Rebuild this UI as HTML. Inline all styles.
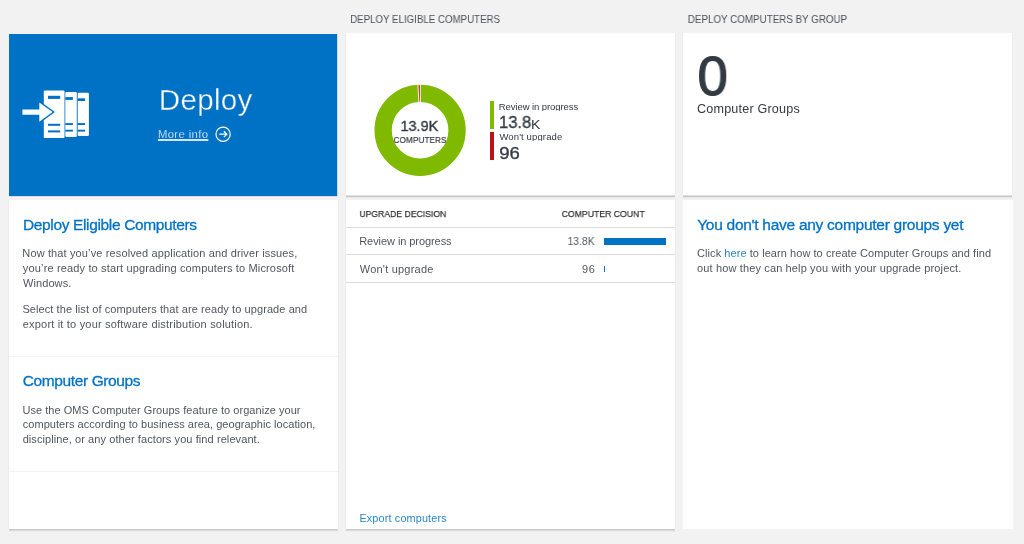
<!DOCTYPE html>
<html lang="en">
<head>
<meta charset="utf-8">
<title>Deploy</title>
<style>
html,body{margin:0;padding:0;}
body{width:1024px;height:544px;overflow:hidden;background:#f2f2f2;font-family:"Liberation Sans",Arial,sans-serif;}
#page{position:relative;width:1024px;height:544px;overflow:hidden;background:#f2f2f2;}
.card{position:absolute;background:#fff;}
.sh-a{box-shadow:0 1px 0 #e0e0e0,0 2px 0 #c8c8c8,0 3px 0 #e7e7e7,-1px 0 0 #ececec,1px 0 0 #ececec;}
.sh-b{box-shadow:0 1px 0 #cacaca,0 2px 0 #dadada,0 3px 0 #ececec,-1px 0 0 #ececec,1px 0 0 #ececec;}
.t{position:absolute;will-change:transform;white-space:nowrap;line-height:20px;margin:0;padding:0;font-weight:normal;display:block;}
.t a{color:#2a86cc;text-decoration:none;}
.hr{position:absolute;height:1px;background:#dcdcdc;}
.hr.soft{background:#f3f3f3;}
svg{position:absolute;overflow:visible;}
#hero{left:9px;top:34px;width:328px;height:162px;background:#0072c6;box-shadow:0 1px 0 #dedbd8,1px 0 0 #c9dcea;}
#c_left{left:9px;top:200px;width:329px;height:329px;}
#c_chart{left:346px;top:33px;width:329px;height:162px;}
#c_table{left:346px;top:200px;width:329px;height:329px;}
#c_num{left:683px;top:33px;width:329px;height:162px;}
#c_empty{left:683px;top:200px;width:330px;height:329px;}
.bar{position:absolute;background:#0072c6;}
.key{position:absolute;width:4.4px;}
#h_a{left:350px;padding-left:0.18px;top:10.23px;font-size:10.3px;color:#4b515a;transform:scaleX(0.9431);transform-origin:0 0;}
#h_b{left:687px;padding-left:0.86px;top:10.23px;font-size:10.3px;color:#4b515a;transform:scaleX(0.9526);transform-origin:0 0;}
#title{left:158px;padding-left:0.84px;top:89.74px;font-size:29.6px;color:#fff;letter-spacing:0.256px;-webkit-text-stroke:0.35px #0072c6;}
#more{left:157px;padding-left:0.94px;top:124.08px;font-size:11.3px;color:#fff;letter-spacing:0.368px;text-decoration:underline;text-underline-offset:0.8px;text-decoration-thickness:1.6px;text-decoration-color:rgba(255,255,255,.82);-webkit-text-stroke:0.25px #0072c6;}
#d_num{left:400px;padding-left:0.42px;top:115.70px;font-size:15.0px;color:#333a44;transform:scaleX(0.9678);transform-origin:0 0;-webkit-text-stroke:0.4px #333a44;}
#d_lbl{left:393px;padding-left:0.59px;top:130.04px;font-size:9.7px;color:#333a44;transform:scaleX(0.8559);transform-origin:0 0;-webkit-text-stroke:0.2px #333a44;}
#l1{left:498px;padding-left:0.71px;top:97.31px;font-size:9.5px;color:#333a44;letter-spacing:-0.072px;height:13.69px;overflow:hidden;}
#l1n{left:498px;padding-left:0.95px;top:113.41px;font-size:17.0px;color:#333a44;transform:scaleX(0.9794);transform-origin:0 0;-webkit-text-stroke:0.35px #333a44;}
#l1k{left:530px;padding-left:0.79px;top:114.57px;font-size:12.2px;color:#333a44;transform:scaleX(1.1483);transform-origin:0 0;}
#l2{left:499px;padding-left:0.40px;top:126.81px;font-size:9.5px;color:#333a44;letter-spacing:0.130px;height:14.19px;overflow:hidden;}
#l2n{left:499px;padding-left:0.18px;top:143.17px;font-size:17.4px;color:#333a44;transform:scaleX(1.0659);transform-origin:0 0;-webkit-text-stroke:0.35px #333a44;}
#th1{left:359px;padding-left:0.40px;top:204.20px;font-size:9.8px;color:#333;transform:scaleX(0.8828);transform-origin:0 0;-webkit-text-stroke:0.25px #333;}
#th2{left:561px;padding-left:0.77px;top:204.20px;font-size:9.8px;color:#333;transform:scaleX(0.8862);transform-origin:0 0;-webkit-text-stroke:0.25px #333;}
#r1a{left:359px;padding-left:0.25px;top:231.49px;font-size:11.0px;color:#51575f;letter-spacing:-0.071px;}
#r1b{left:567px;padding-left:0.50px;top:230.99px;font-size:11.0px;color:#51575f;transform:scaleX(0.9436);transform-origin:0 0;}
#r2a{left:359px;padding-left:0.82px;top:258.89px;font-size:11.0px;color:#51575f;letter-spacing:0.210px;}
#r2b{left:582px;padding-left:0.10px;top:258.99px;font-size:11.0px;color:#51575f;letter-spacing:0.443px;}
#exp{left:359px;padding-left:0.40px;top:507.76px;font-size:10.8px;color:#2a86cc;letter-spacing:0.175px;}
#zero{left:697px;padding-left:0.52px;top:66.20px;font-size:56.0px;color:#333a44;transform:scaleX(0.9745);transform-origin:0 0;-webkit-text-stroke:1.2px #333a44;}
#cg{left:697px;padding-left:0.02px;top:98.73px;font-size:12.6px;color:#333a44;letter-spacing:0.184px;}
#rh{left:697px;padding-left:0.18px;top:214.73px;font-size:15.5px;color:#0072c6;letter-spacing:-0.272px;-webkit-text-stroke:0.3px #0072c6;}
#rb1{left:697px;padding-left:0.08px;top:242.99px;font-size:11.0px;color:#51575f;letter-spacing:0.061px;}
#rb2{left:697px;padding-left:0.12px;top:257.99px;font-size:11.0px;color:#51575f;letter-spacing:0.132px;}
#lh1{left:22px;padding-left:0.91px;top:215.13px;font-size:15.5px;color:#0072c6;letter-spacing:-0.351px;-webkit-text-stroke:0.3px #0072c6;}
#lb1{left:22px;padding-left:0.33px;top:242.59px;font-size:11.0px;color:#51575f;letter-spacing:0.131px;}
#lb2{left:22px;padding-left:0.86px;top:258.39px;font-size:11.0px;color:#51575f;letter-spacing:0.150px;}
#lb3{left:22px;padding-left:0.98px;top:273.19px;font-size:11.0px;color:#51575f;letter-spacing:0.089px;}
#lb4{left:22px;padding-left:0.40px;top:298.99px;font-size:11.0px;color:#51575f;letter-spacing:0.083px;}
#lb5{left:22px;padding-left:0.78px;top:313.79px;font-size:11.0px;color:#51575f;letter-spacing:0.191px;}
#lh2{left:22px;padding-left:0.70px;top:371.03px;font-size:15.5px;color:#0072c6;letter-spacing:-0.378px;-webkit-text-stroke:0.3px #0072c6;}
#lc1{left:22px;padding-left:0.40px;top:399.69px;font-size:11.0px;color:#51575f;letter-spacing:0.047px;}
#lc2{left:22px;padding-left:0.78px;top:414.49px;font-size:11.0px;color:#51575f;letter-spacing:0.038px;}
#lc3{left:22px;padding-left:0.63px;top:428.99px;font-size:11.0px;color:#51575f;letter-spacing:0.084px;}
</style>
</head>
<body>
<div id="page">

<section>
  <div class="card" id="hero"></div>
  <svg id="ico" style="left:0;top:0" width="1024" height="544" viewBox="0 0 1024 544">
    <!-- servers -->
    <g fill="#fff">
      <rect x="77.7" y="92.7" width="11.2" height="43.3" rx="1.2"/>
      <rect x="65.3" y="91.9" width="11.5" height="45.1" rx="1.2"/>
      <rect x="43.8" y="90.4" width="20.7" height="47.7" rx="1.2"/>
    </g>
    <g fill="#0072c6">
      <rect x="48" y="95.8" width="12.2" height="3.1"/>
      <rect x="48" y="123.8" width="12.2" height="2"/>
      <rect x="48" y="130.4" width="12.2" height="2"/>
      <rect x="65.3" y="97.1" width="7.6" height="2.8"/>
      <rect x="65.3" y="123.1" width="7.6" height="1.9"/>
      <rect x="65.3" y="129.7" width="7.6" height="1.9"/>
      <rect x="77.7" y="98.3" width="7.4" height="2.7"/>
      <rect x="77.7" y="123.1" width="7.4" height="1.9"/>
      <rect x="77.7" y="129.7" width="7.4" height="1.9"/>
    </g>
    <!-- arrow with blue outline cut into the front server -->
    <path d="M22.4 109.4H39.3V102.4L52.6 112.1L39.3 121.8V114.8H22.4Z" fill="#fff" stroke="#0072c6" stroke-width="2.8" paint-order="stroke"/>
    <!-- more-info circle arrow -->
    <circle cx="223.1" cy="134.2" r="7.1" fill="none" stroke="#fff" stroke-width="1.2"/>
    <path d="M219.3 134.2H226.6M223.9 131.3L226.8 134.2L223.9 137.1" fill="none" stroke="#fff" stroke-width="1.3"/>
  </svg>
  <h1 class="t" id="title">Deploy</h1>
  <a class="t" id="more">More info</a>
</section>

<section>
  <div class="card sh-b" id="c_left"></div>
  <h2 class="t" id="lh1">Deploy Eligible Computers</h2>
  <p class="t" id="lb1">Now that you’ve resolved application and driver issues,</p>
  <p class="t" id="lb2">you’re ready to start upgrading computers to Microsoft</p>
  <p class="t" id="lb3">Windows.</p>
  <p class="t" id="lb4">Select the list of computers that are ready to upgrade and</p>
  <p class="t" id="lb5">export it to your software distribution solution.</p>
  <div class="hr soft" style="left:9px;top:356px;width:329px"></div>
  <h2 class="t" id="lh2">Computer Groups</h2>
  <p class="t" id="lc1">Use the OMS Computer Groups feature to organize your</p>
  <p class="t" id="lc2">computers according to business area, geographic location,</p>
  <p class="t" id="lc3">discipline, or any other factors you find relevant.</p>
  <div class="hr soft" style="left:9px;top:471px;width:329px"></div>
</section>

<section>
  <div class="t" id="h_a">DEPLOY ELIGIBLE COMPUTERS</div>
  <div class="card sh-a" id="c_chart"></div>
  <svg style="left:0;top:0" width="1024" height="544" viewBox="0 0 1024 544">
    <circle cx="420.1" cy="130.3" r="36.95" fill="none" stroke="#7fba00" stroke-width="17.30"/>
    <path d="M420.35 84.70L420.35 102.00L418.87 102.04L417.96 84.76Z" fill="#c01f27" stroke="#fff" stroke-width="0.9"/>
  </svg>
  <div class="t" id="d_num">13.9K</div>
  <div class="t" id="d_lbl">COMPUTERS</div>
  <div class="key" style="left:490px;top:101.1px;height:27.7px;background:#7fba00"></div>
  <div class="t" id="l1">Review in progress</div>
  <div class="t" id="l1n">13.8</div>
  <div class="t" id="l1k">K</div>
  <div class="key" style="left:490px;top:132px;height:27.6px;background:#ba141a"></div>
  <div class="t" id="l2">Won't upgrade</div>
  <div class="t" id="l2n">96</div>

  <div class="card sh-b" id="c_table"></div>
  <div class="t" id="th1">UPGRADE DECISION</div>
  <div class="t" id="th2">COMPUTER COUNT</div>
  <div class="hr" style="left:346px;top:227.1px;width:329px"></div>
  <div class="t" id="r1a">Review in progress</div>
  <div class="t" id="r1b">13.8K</div>
  <div class="bar" style="left:604px;top:238.2px;width:62.3px;height:6.5px"></div>
  <div class="hr" style="left:346px;top:254px;width:329px"></div>
  <div class="t" id="r2a">Won't upgrade</div>
  <div class="t" id="r2b">96</div>
  <div class="bar" style="left:604px;top:265.8px;width:1px;height:6.3px"></div>
  <div class="hr" style="left:346px;top:281.8px;width:329px"></div>
  <a class="t" id="exp">Export computers</a>
</section>

<section>
  <div class="t" id="h_b">DEPLOY COMPUTERS BY GROUP</div>
  <div class="card sh-a" id="c_num"></div>
  <div class="t" id="zero">0</div>
  <div class="t" id="cg">Computer Groups</div>
  <div class="card" id="c_empty"></div>
  <h2 class="t" id="rh">You don't have any computer groups yet</h2>
  <p class="t" id="rb1">Click <a>here</a> to learn how to create Computer Groups and find</p>
  <p class="t" id="rb2">out how they can help you with your upgrade project.</p>
</section>

</div>
</body>
</html>
